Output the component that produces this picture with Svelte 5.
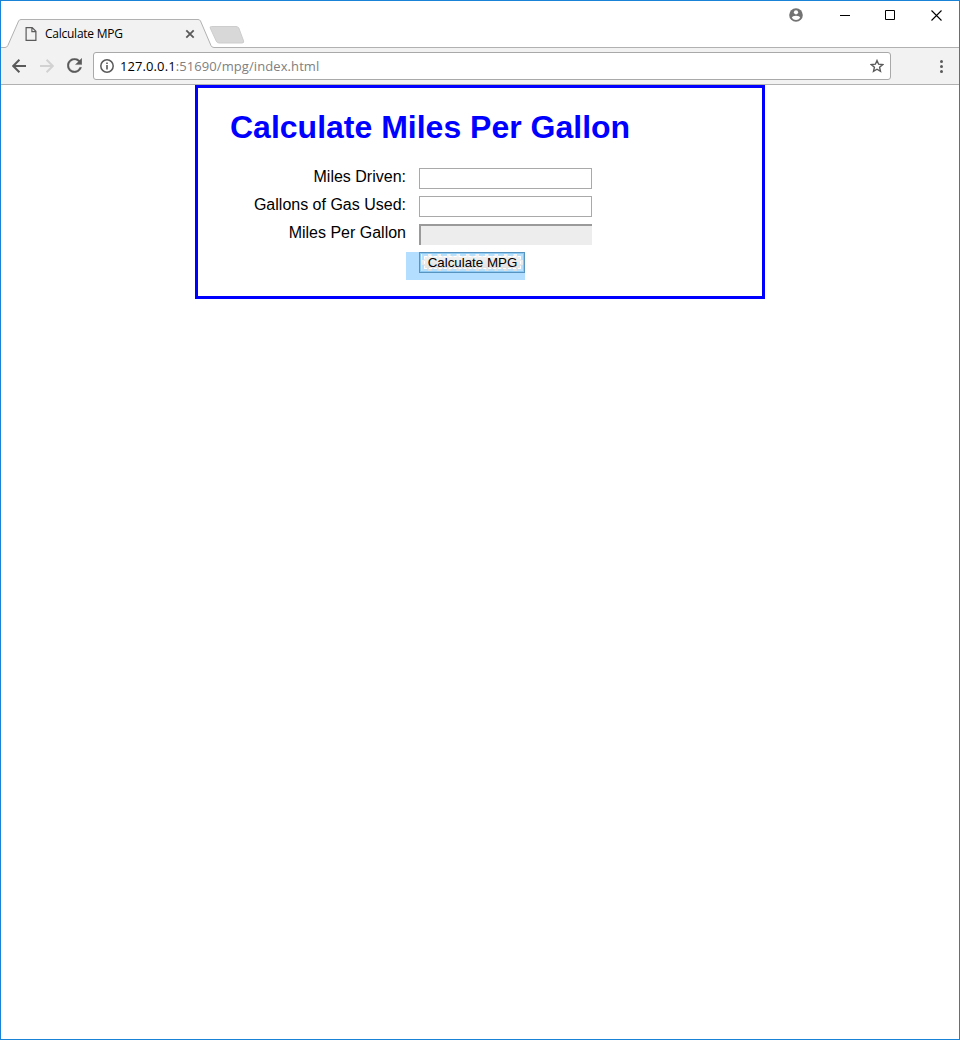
<script>
  let miles = $state('');
  let gallons = $state('');
  let result = $state('');
  function calculate() {
    const m = parseFloat(miles);
    const g = parseFloat(gallons);
    if (m > 0 && g > 0) result = (m / g).toFixed(1);
  }
</script>

<div class="window">
  <header class="strip">
    <svg class="shape" width="958" height="47" viewBox="1 1 958 47" fill="none">
      <path d="M1 47.5H5Q7 47.5 7.8 45.6L18.6 21Q19.3 19.5 21 19.5H198Q199.8 19.5 200.5 21L211 45.6Q211.8 47.5 214 47.5H959V49H1Z" fill="#f2f2f2" stroke="none" />
      <path d="M1 47.5H5Q7 47.5 7.8 45.6L18.6 21Q19.3 19.5 21 19.5H198Q199.8 19.5 200.5 21L211 45.6Q211.8 47.5 214 47.5H959" stroke="#b1b1b1" />
      <path d="M211.5 26.5H236Q238 26.5 238.8 28L243.6 41Q244.2 43 242 43H219Q217 43 216.2 41L210.2 28Q209.6 26.5 211.5 26.5Z" fill="#d8d8d8" stroke="#cdcdcd" />
    </svg>
    <div class="tab">
      <svg width="12" height="14" viewBox="0 0 12 14" fill="none" stroke="#5a5a5a" stroke-width="1.2">
        <path d="M1.1 .6H7.2L10.9 4.3V13.4H1.1ZM6.9 .8V4.6H10.7" />
      </svg>
      <span class="title">Calculate MPG</span>
      <svg class="close" width="10" height="10" viewBox="0 0 10 10" stroke="#5a5a5a" stroke-width="1.8"><path d="M1.3 1.3L8.7 8.7M8.7 1.3L1.3 8.7" /></svg>
    </div>
    <div class="controls">
      <svg width="14" height="14" viewBox="0 0 14 14"><circle cx="7" cy="7" r="6.8" fill="#737373" /><circle cx="7" cy="4.3" r="2.1" fill="#fff" /><path d="M2.8 9.8Q3.3 7.8 7 7.8T11.2 9.8Q9.6 12 7 12T2.8 9.8Z" fill="#fff" /></svg>
      <svg class="min" width="10" height="11" viewBox="0 0 10 11"><path d="M0 5.5H10" stroke="#000" /></svg>
      <svg class="max" width="10" height="10" viewBox="0 0 10 10"><path d="M.5 .5H9.5V9.5H.5Z" fill="none" stroke="#000" /></svg>
      <svg class="exit" width="11" height="11" viewBox="0 0 11 11"><path d="M.5 .5L10.5 10.5M10.5 .5L.5 10.5" stroke="#000" stroke-width="1.1" /></svg>
    </div>
  </header>

  <nav class="toolbar">
    <svg class="back" width="14" height="14" viewBox="0 0 14 14" fill="none" stroke="#5a5a5a" stroke-width="2"><path d="M14 7H1.6M7.4 .8L1.2 7L7.4 13.2" /></svg>
    <svg class="forward" width="14" height="14" viewBox="0 0 14 14" fill="none" stroke="#d2d2d2" stroke-width="2"><path d="M0 7H12.4M6.6 .8L12.8 7L6.6 13.2" /></svg>
    <svg class="reload" width="15" height="15" viewBox="3.8 3.8 16.4 16.4" fill="#5a5a5a" stroke="#5a5a5a" stroke-width=".3"><path d="M17.65 6.35C16.2 4.9 14.21 4 12 4c-4.42 0-7.99 3.58-7.99 8s3.57 8 7.99 8c3.73 0 6.84-2.55 7.73-6h-2.08c-.82 2.33-3.04 4-5.65 4-3.31 0-6-2.69-6-6s2.69-6 6-6c1.66 0 3.14.69 4.22 1.78L13 11h7V4l-2.35 2.35z" /></svg>
    <div class="address">
      <svg width="14" height="14" viewBox="0 0 14 14" fill="none" stroke="#5a5a5a"><circle cx="7" cy="7" r="6.2" stroke-width="1.5" /><path d="M7 6V10.5M7 3.4V4.9" stroke-width="1.6" /></svg>
      <span class="url">127.0.0.1<span>:51690/mpg/index.html</span></span>
      <svg class="star" width="14" height="14" viewBox="0 0 14 14" fill="none" stroke="#5a5a5a" stroke-width="1.4"><path d="M7 1.5L8.6 5.2L12.7 5.6L9.6 8.3L10.5 12.3L7 10.2L3.5 12.3L4.4 8.3L1.3 5.6L5.4 5.2Z" /></svg>
    </div>
    <svg class="menu" width="5" height="14" viewBox="0 0 5 14" fill="#5a5a5a"><circle cx="2.5" cy="2.5" r="1.5" /><circle cx="2.5" cy="7.5" r="1.5" /><circle cx="2.5" cy="12.5" r="1.5" /></svg>
  </nav>

  <main>
    <h1>Calculate Miles Per Gallon</h1>
    <div class="row"><label for="miles">Miles Driven:</label><input id="miles" type="text" bind:value={miles} /></div>
    <div class="row"><label for="gallons">Gallons of Gas Used:</label><input id="gallons" type="text" bind:value={gallons} /></div>
    <div class="row"><label for="mpg">Miles Per Gallon</label><input id="mpg" class="disabled" type="text" disabled value={result} /></div>
    <div class="action"><button type="button" onclick={calculate}><span>Calculate MPG</span></button></div>
  </main>
</div>

<style>
  :global(body) { margin: 0; background: #fff; }
  * { box-sizing: border-box; }
  svg { display: block; flex: none; }
  .window { width: 960px; height: 1040px; border: 1px solid #1883d7; background: #fff; overflow: hidden; font-family: "Liberation Sans", Arial, sans-serif; }
  .strip { position: relative; height: 47px; display: flex; justify-content: space-between; }
  .shape { position: absolute; left: 0; top: 0; }
  .tab { position: relative; width: 194px; height: 28px; margin-top: 19px; padding-left: 24px; display: flex; align-items: center; font: 12px/16px "Open Sans", "Noto Sans", sans-serif; color: #000; }
  .title { width: 78px; margin-left: 8px; white-space: nowrap; letter-spacing: -.25px; }
  .close { margin-left: auto; }
  .controls { position: relative; display: flex; padding: 7px 17px 0 0; height: 30px; align-items: flex-start; }
  .min { margin: 2px 0 0 37px; }
  .max { margin: 2px 0 0 35px; }
  .exit { margin: 2px 0 0 36px; }
  .toolbar { height: 37px; display: flex; align-items: center; padding: 0 15px 1px 11px; border-bottom: 1px solid #b1b1b1; background: #f2f2f2; }
  .forward { margin-left: 14px; }
  .reload { margin-left: 13px; }
  .address { width: 798px; height: 28px; margin-left: 11px; padding: 0 6px; border: 1px solid #a9a9a9; border-radius: 3px; background: #fff; display: flex; align-items: center; }
  .url { margin-left: 6px; font: 13px/18px "Open Sans", "Noto Sans", sans-serif; letter-spacing: .09px; color: #000; white-space: nowrap; }
  .url span { color: #808080; }
  .star { margin-left: auto; }
  .menu { margin-left: auto; }
  main { width: 570px; height: 214px; margin: 0 auto; padding: 21px 32px 0; border: 3px solid #00f; background: #fff; }
  h1 { margin: 0 0 19px; font-size: 32px; line-height: 37px; color: #00f; white-space: nowrap; }
  .row { display: flex; height: 28px; align-items: flex-start; }
  label { width: 176px; padding-top: 3px; text-align: right; font-size: 16px; line-height: 18px; white-space: nowrap; }
  input { width: 173px; height: 21px; margin: 3px 0 0 13px; padding: 1px; border: 1px solid #a9a9a9; border-radius: 0; background: #fff; font: 13.333px "Liberation Sans", Arial, sans-serif; outline: 0; }
  input.disabled { border: solid; border-width: 2px 0 0 2px; border-color: #9a9a9a; background: #ededed; }
  .action { width: 119px; height: 28px; margin: 3px 0 0 176px; padding-left: 13px; background: #b3deff; }
  button { display: block; width: 106px; height: 21px; padding: 1px; border: 1px solid #5794bf; border-radius: 0; background: linear-gradient(#f5f5f5, #dedede); box-shadow: inset 0 0 0 1px #8fcaf5; color: #000; font: 13.333px/15px "Liberation Sans", Arial, sans-serif; }
  button span { display: block; height: 17px; border: 2px dashed #b9e0fb; outline: 1px dashed #fff; outline-offset: -3px; line-height: 13px; margin: 0 0 0 1px; white-space: nowrap; }
</style>
